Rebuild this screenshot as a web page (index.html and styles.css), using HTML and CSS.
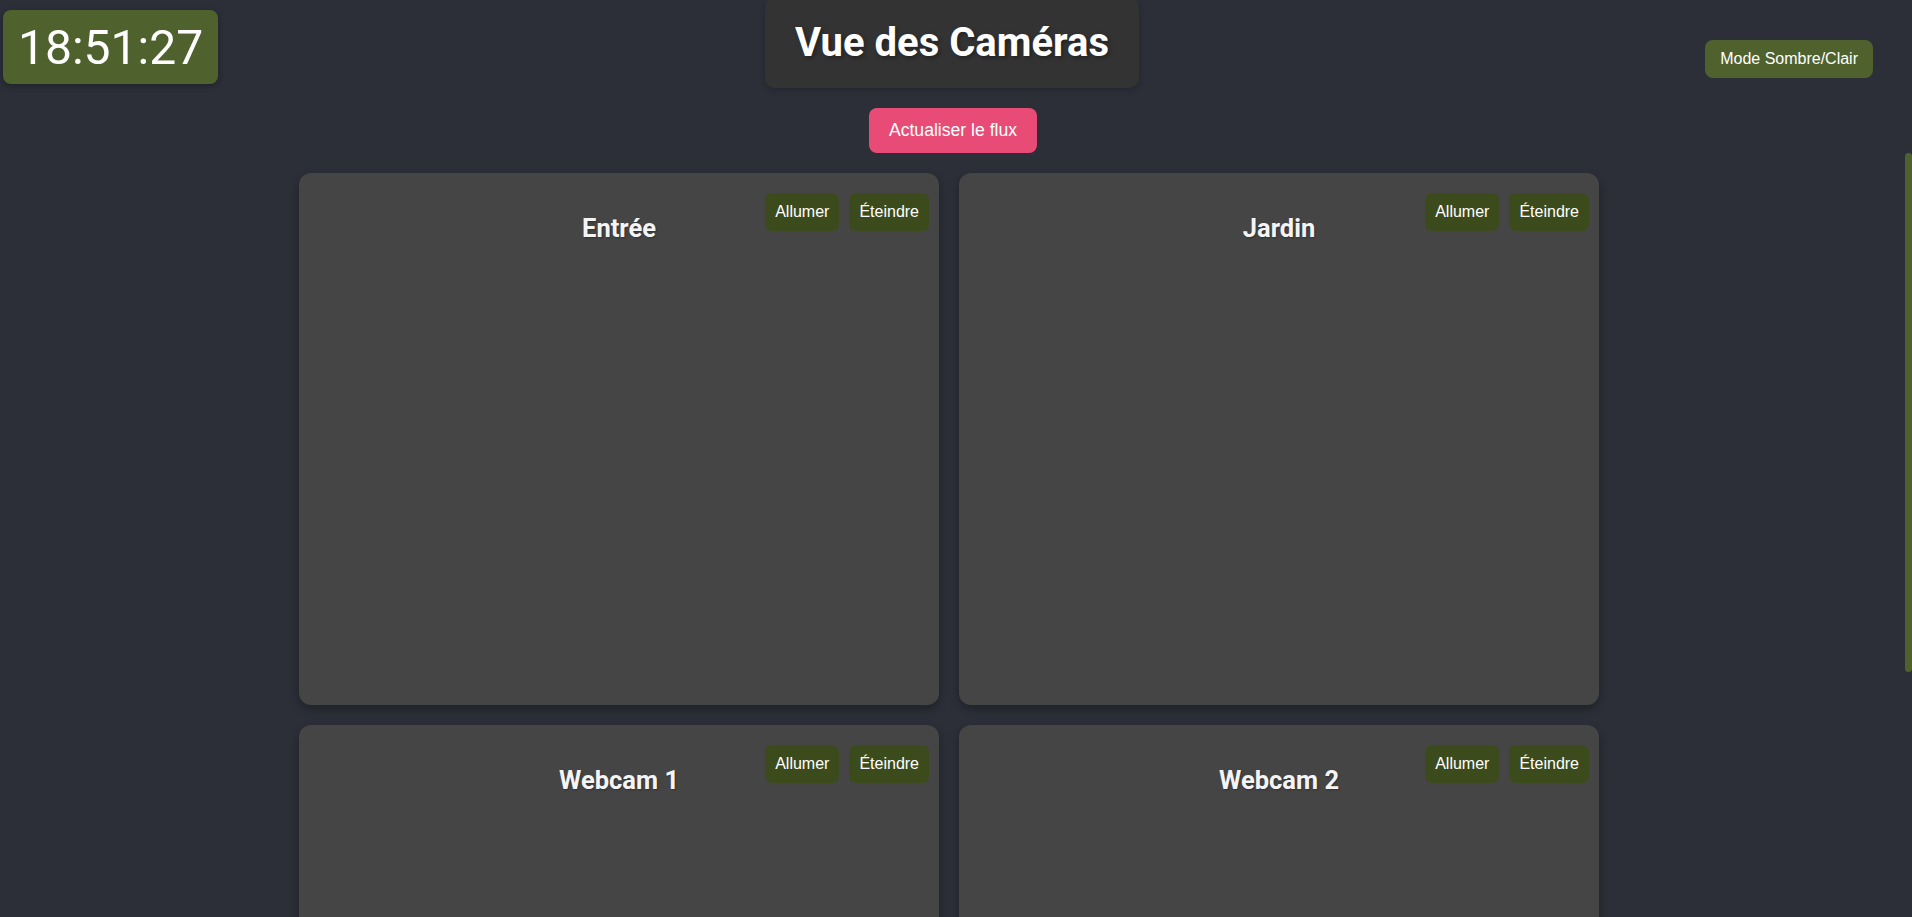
FILE: index.html
```html
<!DOCTYPE html>
<html lang="fr">
<head>
<meta charset="utf-8">
<title>Vue des Caméras</title>
<link rel="stylesheet" href="styles.css">
</head>
<body>
  <div class="clock">18:51:27</div>
  <button class="mode-toggle">Mode Sombre/Clair</button>
  <div class="scroll-thumb"></div>

  <header class="page-header">
    <h1 class="page-title">Vue des Caméras</h1>
    <button class="refresh-btn">Actualiser le flux</button>
  </header>

  <main class="camera-grid">
    <section class="camera-card">
      <div class="camera-actions">
        <button class="cam-btn">Allumer</button>
        <button class="cam-btn">Éteindre</button>
      </div>
      <h2 class="camera-name">Entrée</h2>
      <div class="camera-feed"></div>
    </section>
    <section class="camera-card">
      <div class="camera-actions">
        <button class="cam-btn">Allumer</button>
        <button class="cam-btn">Éteindre</button>
      </div>
      <h2 class="camera-name">Jardin</h2>
      <div class="camera-feed"></div>
    </section>
    <section class="camera-card">
      <div class="camera-actions">
        <button class="cam-btn">Allumer</button>
        <button class="cam-btn">Éteindre</button>
      </div>
      <h2 class="camera-name">Webcam 1</h2>
      <div class="camera-feed"></div>
    </section>
    <section class="camera-card">
      <div class="camera-actions">
        <button class="cam-btn">Allumer</button>
        <button class="cam-btn">Éteindre</button>
      </div>
      <h2 class="camera-name">Webcam 2</h2>
      <div class="camera-feed"></div>
    </section>
  </main>
</body>
</html>
```

FILE: styles.css
```css
html, body {
  overflow: hidden;
}

body {
  margin: 0;
  padding: 0 8px 40px 0;
  background: #2c2f38;
  color: #ffffff;
  font-family: Roboto, "Liberation Sans", sans-serif;
}

.clock {
  position: fixed;
  top: 10px;
  left: 3px;
  padding: 9px 15px 8px;
  background: #4f622d;
  border-radius: 8px;
  font-size: 48px;
  font-weight: 400;
  line-height: normal;
  box-shadow: 0 2px 6px rgba(0, 0, 0, 0.3);
  z-index: 5;
}

.mode-toggle {
  position: fixed;
  top: 40px;
  right: 39px;
  padding: 10px 15px;
  background: #4f622d;
  color: #ffffff;
  border: none;
  border-radius: 8px;
  font-family: "Liberation Sans", Arial, sans-serif;
  font-size: 16px;
  line-height: normal;
  z-index: 5;
}

.scroll-thumb {
  position: fixed;
  top: 153px;
  right: 0;
  width: 7px;
  height: 519px;
  background: #4f622d;
  border-radius: 4px;
  z-index: 5;
}

.page-header {
  display: flex;
  flex-direction: column;
  align-items: center;
  gap: 20px;
  margin-bottom: 20px;
}

.page-title {
  margin: -3px 0 0;
  padding: 22px 30px 22px;
  background: #333333;
  border-radius: 10px;
  font-size: 40px;
  font-weight: 700;
  line-height: normal;
  text-shadow: 2px 2px 4px rgba(0, 0, 0, 0.35);
  box-shadow: 0 2px 6px rgba(0, 0, 0, 0.2);
}

.refresh-btn {
  margin-left: 2px;
  padding: 12px 20px;
  background: #e84c76;
  color: #ffffff;
  border: none;
  border-radius: 8px;
  font-family: "Liberation Sans", Arial, sans-serif;
  font-size: 17.6px;
  line-height: normal;
}

.camera-grid {
  display: grid;
  grid-template-columns: repeat(2, 640px);
  gap: 20px;
  width: 1306px;
  padding-right: 6px;
  box-sizing: border-box;
  margin: 0 auto;
}

.camera-card {
  position: relative;
  height: 532px;
  box-sizing: border-box;
  padding: 20px;
  background: #454545;
  border-radius: 12px;
  box-shadow: 0 4px 10px rgba(0, 0, 0, 0.3);
  display: flex;
  flex-direction: column;
}

.camera-actions {
  position: absolute;
  top: 20px;
  right: 10px;
  display: flex;
  gap: 10px;
}

.cam-btn {
  padding: 10px;
  background: #3c4b1c;
  color: #ffffff;
  border: none;
  border-radius: 7px;
  font-family: "Liberation Sans", Arial, sans-serif;
  font-size: 16px;
  line-height: normal;
}

.camera-name {
  margin: 20px 0;
  text-align: center;
  font-size: 25.5px;
  font-weight: 700;
  line-height: normal;
  color: #f4f4f4;
  text-shadow: 1px 1px 2px rgba(0, 0, 0, 0.3);
}

.camera-feed {
  flex: 1;
}
```
